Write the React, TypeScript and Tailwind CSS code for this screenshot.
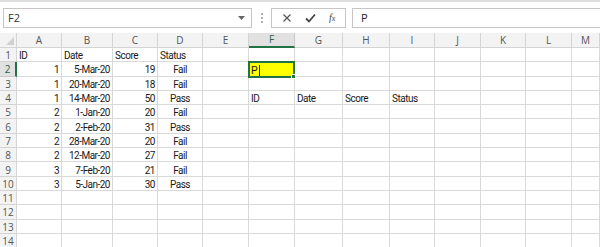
import { Fragment } from "react";

const cols = ["A", "B", "C", "D", "E", "F", "G", "H", "I", "J", "K", "L", "M"];
const widths = [45, 51, 45, 45, 46, 46, 48, 47, 45, 46, 45, 46, 28];

type Cell = { v: string; align?: "left" | "right" | "center" };

const data: (Cell | null)[][] = [
  [{ v: "ID" }, { v: "Date" }, { v: "Score" }, { v: "Status" }],
  [{ v: "1", align: "right" }, { v: "5-Mar-20", align: "right" }, { v: "19", align: "right" }, { v: "Fail", align: "center" }],
  [{ v: "1", align: "right" }, { v: "20-Mar-20", align: "right" }, { v: "18", align: "right" }, { v: "Fail", align: "center" }],
  [{ v: "1", align: "right" }, { v: "14-Mar-20", align: "right" }, { v: "50", align: "right" }, { v: "Pass", align: "center" }, null, { v: "ID" }, { v: "Date" }, { v: "Score" }, { v: "Status" }],
  [{ v: "2", align: "right" }, { v: "1-Jan-20", align: "right" }, { v: "20", align: "right" }, { v: "Fail", align: "center" }],
  [{ v: "2", align: "right" }, { v: "2-Feb-20", align: "right" }, { v: "31", align: "right" }, { v: "Pass", align: "center" }],
  [{ v: "2", align: "right" }, { v: "28-Mar-20", align: "right" }, { v: "20", align: "right" }, { v: "Fail", align: "center" }],
  [{ v: "2", align: "right" }, { v: "12-Mar-20", align: "right" }, { v: "27", align: "right" }, { v: "Fail", align: "center" }],
  [{ v: "3", align: "right" }, { v: "7-Feb-20", align: "right" }, { v: "21", align: "right" }, { v: "Fail", align: "center" }],
  [{ v: "3", align: "right" }, { v: "5-Jan-20", align: "right" }, { v: "30", align: "right" }, { v: "Pass", align: "center" }],
  [],
  [],
  [],
  [],
];

const alignCls = { left: "justify-start pl-[2px]", right: "justify-end pr-[2px]", center: "justify-center" };

export default function App() {
  const template = `17px ${widths.map((w) => `${w}px`).join(" ")}`;

  return (
    <div className="w-[600px] h-[247px] overflow-hidden bg-white antialiased font-['Roboto','Liberation_Sans',sans-serif] text-[#1a1a1a]">
      {/* formula bar */}
      <div className="border-t-2 border-[#dcdcdc] bg-white h-[33px] pt-[6px] flex items-start">
        <div className="ml-[3px] w-[249px] h-[20px] border border-[#c6c6c6] flex items-center justify-between pl-[4px] pr-[6px] text-[11px] font-['Open_Sans',sans-serif] text-[#333]">
          <span>F2</span>
          <svg width="7" height="4" viewBox="0 0 7 4"><path d="M0 0h7L3.5 4z" fill="#666" /></svg>
        </div>
        <div className="w-[19px] h-[20px] flex flex-col items-center justify-center gap-[2px]">
          <span className="w-[2px] h-[2px] bg-[#b0b0b0]" />
          <span className="w-[2px] h-[2px] bg-[#b0b0b0]" />
          <span className="w-[2px] h-[2px] bg-[#b0b0b0]" />
        </div>
        <div className="w-[75px] h-[20px] border border-[#c6c6c6] flex items-center justify-around px-[3px]">
          <svg width="10" height="10" viewBox="0 0 10 10"><path d="M1.5 1.5l7 7M8.5 1.5l-7 7" stroke="#555" strokeWidth="1.2" /></svg>
          <svg width="11" height="10" viewBox="0 0 11 10"><path d="M1 5.5l3 3 6-7" stroke="#444" strokeWidth="1.8" fill="none" /></svg>
          <span className="text-[10px] italic font-['Liberation_Serif',serif] text-[#444] leading-none">f<span className="text-[8px]">x</span></span>
        </div>
        <div className="ml-[6px] flex-1 h-[20px] border border-[#c6c6c6] border-r-0 flex items-center pl-[8px] text-[11px] font-['Open_Sans',sans-serif] text-[#222]">
          P
        </div>
      </div>

      {/* sheet */}
      <div className="grid" style={{ gridTemplateColumns: template }}>
        {/* header row */}
        <div className="h-[15px] bg-[#f3f3f3] border-r border-b border-[#d4d4d4] relative">
          <svg className="absolute right-[2px] bottom-[2px]" width="8" height="8" viewBox="0 0 8 8"><path d="M8 0v8H0z" fill="#d0d0d0" /></svg>
        </div>
        {cols.map((c) =>
          c === "F" ? (
            <div key={c} className="h-[15px] bg-[#e1e1e1] border-r border-[#c8c8c8] border-b-2 border-b-[#217346] flex items-center justify-center text-[10px] text-[#2f5f45] font-['Open_Sans',sans-serif]">
              {c}
            </div>
          ) : (
            <div key={c} className="h-[15px] bg-[#f3f3f3] border-r border-b border-[#d4d4d4] flex items-center justify-center text-[10px] text-[#555] font-['Open_Sans',sans-serif]">
              {c}
            </div>
          )
        )}

        {data.map((row, ri) => (
          <Fragment key={ri}>
            <div
              className={
                ri === 1
                  ? "h-[14.3px] pt-[2px] bg-[#e1e1e1] border-r-2 border-r-[#217346] border-b border-[#c8c8c8] flex items-center justify-center text-[10px] text-[#2f5f45] font-['Open_Sans',sans-serif]"
                  : "h-[14.3px] pt-[2px] bg-[#f3f3f3] border-r border-b border-[#d4d4d4] flex items-center justify-center text-[10px] text-[#555] font-['Open_Sans',sans-serif]"
              }
            >
              {ri + 1}
            </div>
            {cols.map((c, ci) => {
              const cell = row[ci];
              if (ri === 1 && c === "F") {
                return (
                  <div key={c} className="h-[14.3px] border-r border-b border-[#d9d9d9] relative">
                    <div className="absolute left-[-1px] top-[-1px] right-[-1px] bottom-[-2px] bg-[#ffff00] border-2 border-[#217346] flex items-center pl-[1px] pt-[2px] text-[10.5px]">
                      <span>P</span>
                      <span className="w-px h-[11px] bg-[#222] ml-[1px]" />
                      <span className="absolute right-[-3px] bottom-[-3px] w-[5px] h-[5px] bg-[#217346] border border-white" />
                    </div>
                  </div>
                );
              }
              return (
                <div
                  key={c}
                  className={`h-[14.3px] pt-[2px] border-r border-b border-[#d9d9d9] flex items-center text-[10px] tracking-[-0.5px] whitespace-nowrap ${alignCls[cell?.align ?? "left"]}`}
                >
                  {cell?.v}
                </div>
              );
            })}
          </Fragment>
        ))}
      </div>
    </div>
  );
}
